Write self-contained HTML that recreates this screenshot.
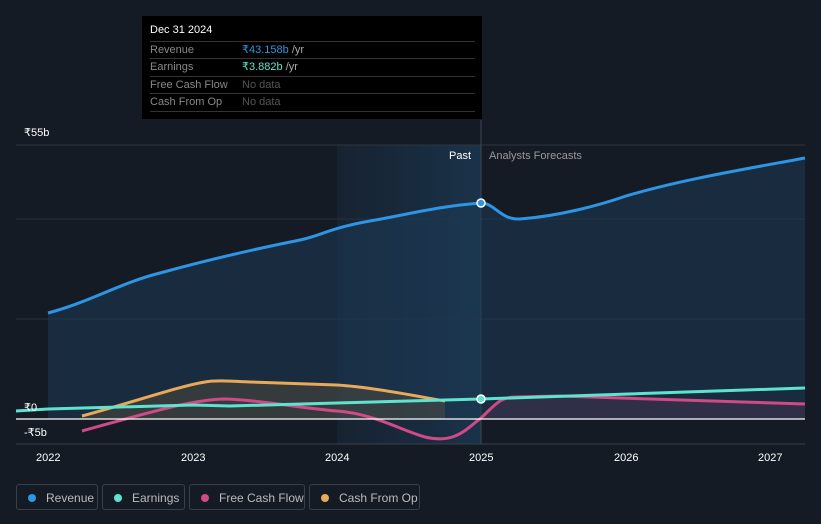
<!DOCTYPE html>
<html><head><style>
body{margin:0;background:#151b24;width:821px;height:524px;overflow:hidden;font-family:"Liberation Sans",sans-serif;position:relative}
.t{position:absolute;font-size:11px;color:#fff}
.tip{position:absolute;left:142px;top:16px;width:340px;height:103px;background:#000}
.tip .r{position:absolute;left:8px;width:325px;border-top:1px solid #333;font-size:11px;color:#888;height:17px;line-height:17px}
.leg{position:absolute;top:484px;height:26px;border:1px solid #3a404a;border-radius:3px;color:#bbb;font-size:12px;line-height:26px;box-sizing:border-box}
.leg i{display:inline-block;width:8px;height:8px;border-radius:50%;margin:0 10px 0 11px;vertical-align:0}
</style></head><body>
<svg width="821" height="524" style="position:absolute;left:0;top:0">
<defs>
<linearGradient id="pg" x1="0" x2="1"><stop offset="0" stop-color="#1a3550" stop-opacity=".3"/><stop offset="1" stop-color="#1c3d5a" stop-opacity=".7"/></linearGradient>
</defs>
<rect x="337" y="145" width="144" height="299" fill="url(#pg)"/>
<line x1="16" y1="145" x2="805" y2="145" stroke="#2e3440"/>
<line x1="16" y1="219" x2="805" y2="219" stroke="#2a303a"/>
<line x1="16" y1="319" x2="805" y2="319" stroke="#2a303a"/>
<line x1="16" y1="444" x2="805" y2="444" stroke="#3a404a"/>
<line x1="481" y1="120" x2="481" y2="444" stroke="#3a4a5a"/>
<path d="M48,313 C90,302 120,283 160,273 C200,262 240,252 300,240 C320,236 330,228 370,221 C410,214 440,206 481,203 C495,203 500,220 520,219 C560,216 600,205 626,196 C680,180 740,170 805,158 L805,419 L48,419Z" fill="#1e3a55" fill-opacity=".55"/>
<path d="M82,416 C140,400 180,386 205,382 C215,380 230,381 250,382 L337,385 C370,387 410,395 445,401 L445,419 L82,419Z" fill="#6b5a3a" fill-opacity=".35"/>
<path d="M481,418 C495,405 500,397 515,397 L805,404 L805,419 L481,419Z" fill="#5a3a55" fill-opacity=".35"/>
<path d="M48,313 C90,302 120,283 160,273 C200,262 240,252 300,240 C320,236 330,228 370,221 C410,214 440,206 481,203 C495,203 500,220 520,219 C560,216 600,205 626,196 C680,180 740,170 805,158" fill="none" stroke="#2d95e3" stroke-width="3"/>
<path d="M82,416 C140,400 180,386 205,382 C215,380 230,381 250,382 L337,385 C370,387 410,395 445,401" fill="none" stroke="#e8a95a" stroke-width="3"/>
<path d="M82,431 C140,415 193,399 225,399 C260,400 300,408 337,411 C375,414 400,430 425,437 C455,444 465,430 481,418 C495,405 500,397 515,397 L560,396 L805,404" fill="none" stroke="#cf4a86" stroke-width="3"/>
<path d="M16,411 L48,409 L193,405 L230,406 L337,403 L481,399 L805,388" fill="none" stroke="#5ee3cf" stroke-width="3"/>
<line x1="16" y1="419" x2="805" y2="419" stroke="#fff" stroke-width="1.3"/>
<circle cx="481" cy="203" r="4" fill="#2d95e3" stroke="#fff" stroke-width="1.5"/>
<circle cx="481" cy="399" r="4" fill="#5ee3cf" stroke="#fff" stroke-width="1.5"/>
</svg>
<div class="t" style="left:24px;top:126px">₹55b</div>
<div class="t" style="left:24px;top:401px">₹0</div>
<div class="t" style="left:24px;top:426px">-₹5b</div>
<div class="t" style="left:449px;top:150px">Past</div>
<div class="t" style="left:489px;top:150px;color:#999">Analysts Forecasts</div>
<div class="t" style="left:36px;top:452px">2022</div>
<div class="t" style="left:181px;top:452px">2023</div>
<div class="t" style="left:325px;top:452px">2024</div>
<div class="t" style="left:469px;top:452px">2025</div>
<div class="t" style="left:614px;top:452px">2026</div>
<div class="t" style="left:758px;top:452px">2027</div>
<div class="tip">
<div style="position:absolute;left:8px;top:8px;color:#fff;font-size:11px">Dec 31 2024</div>
<div class="r" style="top:25px">Revenue<span style="position:absolute;left:92px;color:#2d95e3">₹43.158b <span style="color:#aaa">/yr</span></span></div>
<div class="r" style="top:42px">Earnings<span style="position:absolute;left:92px;color:#5ee3cf">₹3.882b <span style="color:#aaa">/yr</span></span></div>
<div class="r" style="top:60px">Free Cash Flow<span style="position:absolute;left:92px;color:#555">No data</span></div>
<div class="r" style="top:77px">Cash From Op<span style="position:absolute;left:92px;color:#555">No data</span></div>
<div class="r" style="top:95px;height:0"></div>
</div>
<div class="leg" style="left:16px;width:82px"><i style="background:#2d95e3"></i>Revenue</div>
<div class="leg" style="left:102px;width:83px"><i style="background:#5ee3cf"></i>Earnings</div>
<div class="leg" style="left:189px;width:116px"><i style="background:#cf4a86"></i>Free Cash Flow</div>
<div class="leg" style="left:309px;width:111px"><i style="background:#e8a95a"></i>Cash From Op</div>
</body></html>
